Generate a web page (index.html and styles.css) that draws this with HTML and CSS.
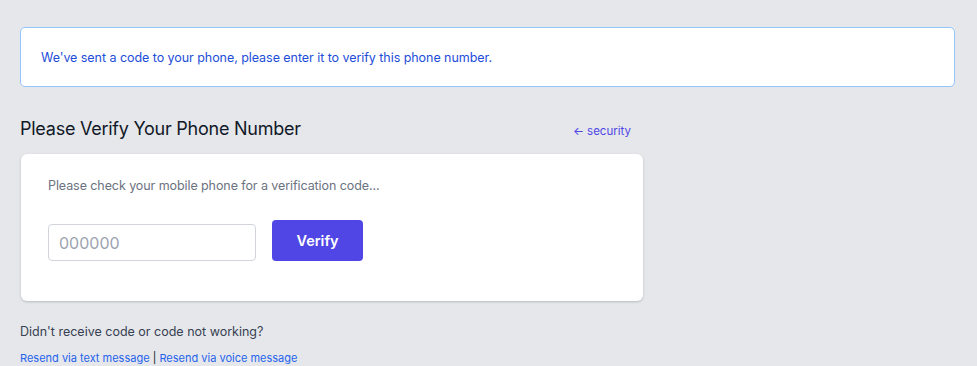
FILE: index.html
```html
<!DOCTYPE html>
<html lang="en">
<head>
<meta charset="utf-8">
<link rel="stylesheet" href="styles.css">
</head>
<body>
<div class="page">
  <div class="alert">We've sent a code to your phone, please enter it to verify this phone number.</div>
  <div class="main">
    <div class="head">
      <h1 class="title">Please Verify Your Phone Number</h1>
      <a class="back" href="#">&larr; security</a>
    </div>
    <div class="card">
      <p class="hint">Please check your mobile phone for a verification code...</p>
      <div class="form">
        <input class="code" type="text" placeholder="000000">
        <button class="btn" type="button">Verify</button>
      </div>
    </div>
    <p class="help">Didn't receive code or code not working?</p>
    <p class="resend"><a href="#">Resend via text message</a> | <a href="#">Resend via voice message</a></p>
  </div>
</div>
</body>
</html>
```
FILE: styles.css
```css
html, body {
  margin: 0;
  padding: 0;
  background: #e5e7eb;
  font-family: Inter, "Noto Sans", sans-serif;
}
.page {
  padding: 27px 22px 0 20px;
}
.alert {
  background: #fff;
  border: 1px solid #93c5fd;
  border-radius: 5px;
  height: 58px;
  display: flex;
  align-items: center;
  padding-left: 20px;
  color: #1d4ed8;
  font-size: 12.5px;
  letter-spacing: -0.05px;
}
.main {
  width: 623px;
  padding-top: 31px;
}
.head {
  display: flex;
  align-items: flex-end;
  justify-content: space-between;
  padding-right: 12px;
}
.title {
  margin: 0;
  font-size: 18px;
  font-weight: 400;
  color: #111827;
  letter-spacing: -0.25px;
  line-height: 22px;
}
.back {
  color: #4f46e5;
  text-decoration: none;
  font-size: 11.5px;
  line-height: 14px;
  margin-bottom: 2px;
}
.card {
  margin-top: 14px;
  margin-left: 1px;
  background: #fff;
  border-radius: 6px;
  box-shadow: 0 1px 3px rgba(0,0,0,0.12), 0 1px 2px rgba(0,0,0,0.08);
  padding: 24px 27px 40px;
}
.hint {
  margin: 0;
  color: #6b7280;
  font-size: 12.5px;
  letter-spacing: -0.08px;
  line-height: 16px;
}
.form {
  display: flex;
  align-items: flex-end;
  gap: 16px;
  margin-top: 26px;
}
.code {
  box-sizing: border-box;
  width: 208px;
  height: 37px;
  border: 1px solid #d1d5db;
  border-radius: 4px;
  padding: 0 10px;
  font-family: inherit;
  font-size: 16px;
  color: #111827;
  outline: none;
}
.code::placeholder {
  color: #9ca3af;
}
.btn {
  width: 91px;
  height: 41px;
  border: 0;
  border-radius: 4px;
  background: #4f46e5;
  color: #fff;
  font-family: inherit;
  font-weight: 600;
  font-size: 14.5px;
}
.help {
  margin: 23px 0 0;
  font-size: 12.5px;
  color: #374151;
  line-height: 16px;
}
.resend {
  margin: 11px 0 0;
  font-size: 11px;
  color: #111827;
  line-height: 14px;
}
.resend a {
  color: #2563eb;
  text-decoration: none;
}
```
